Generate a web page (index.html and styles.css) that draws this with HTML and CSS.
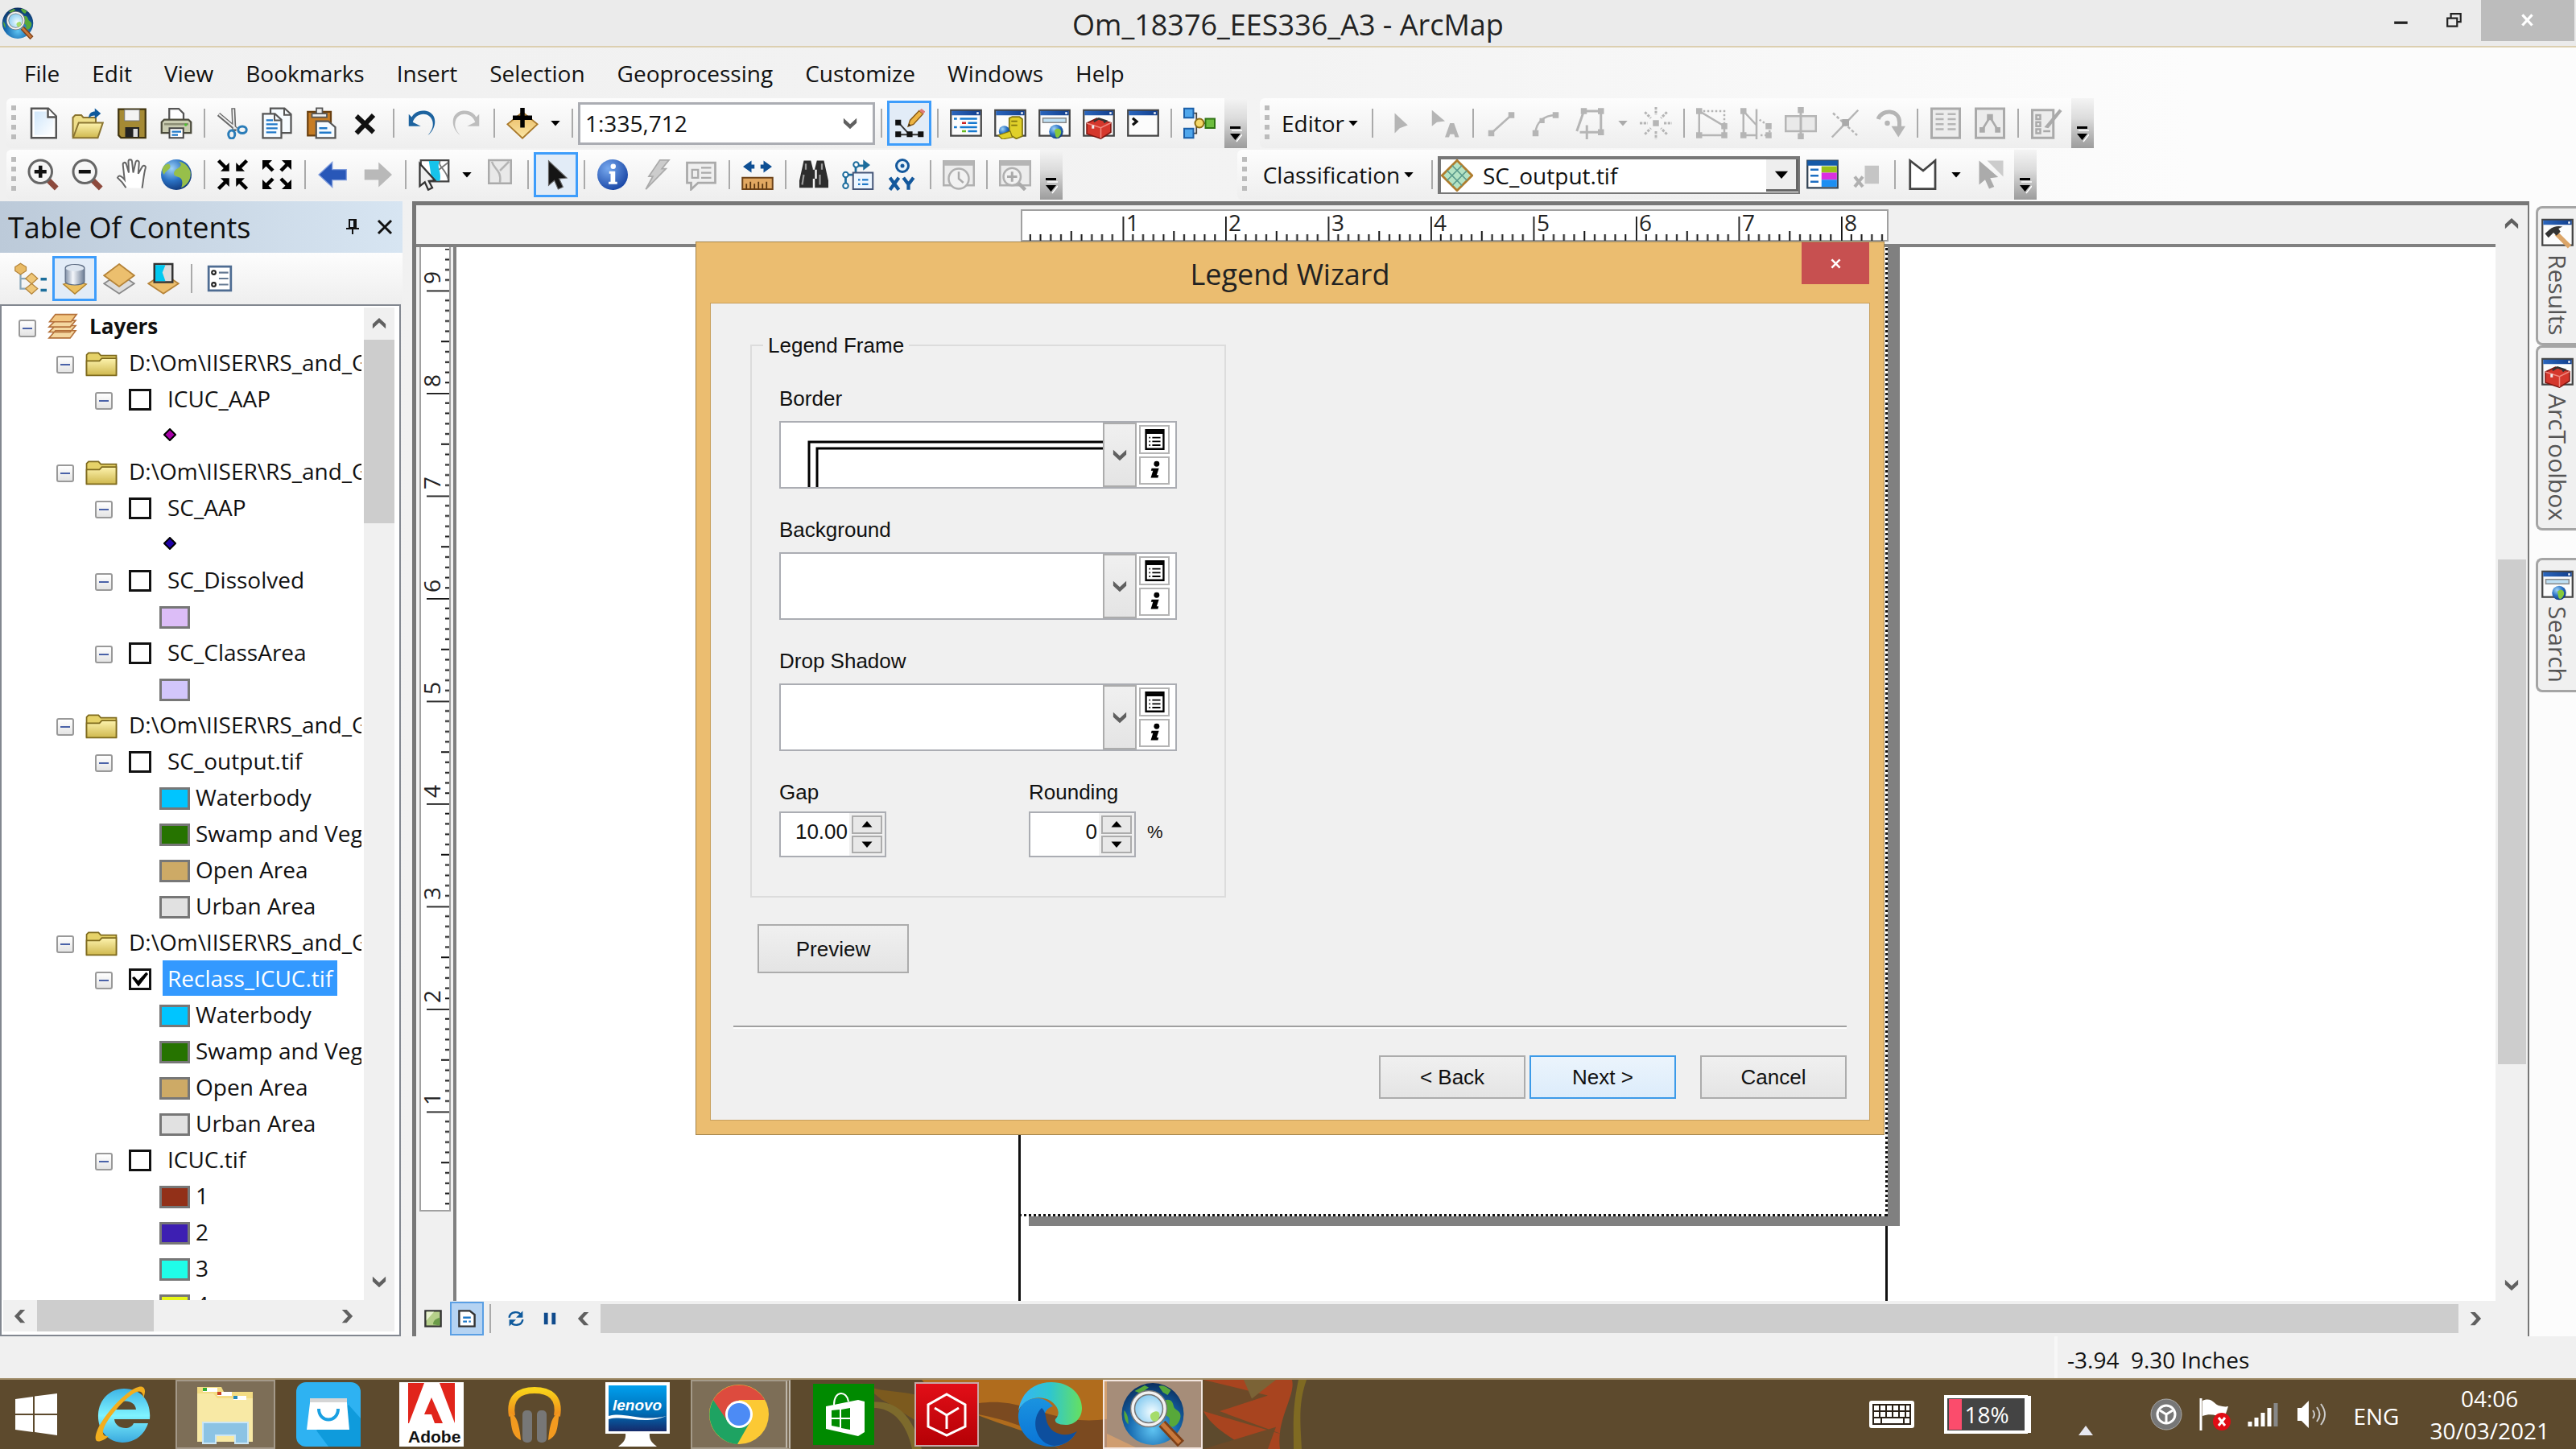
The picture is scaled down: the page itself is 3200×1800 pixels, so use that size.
FILE: index.html
```html
<!DOCTYPE html>
<html lang="en">
<head>
<meta charset="utf-8">
<title>Om_18376_EES336_A3 - ArcMap</title>
<link rel="stylesheet" href="styles.css">
</head>
<body>
<svg class="defs" aria-hidden="true">
  <defs>
    <linearGradient id="gPaper" x2="1" y2="1"><stop offset="0" stop-color="#cfe6fa"/><stop offset="1" stop-color="#fff"/></linearGradient>
    <linearGradient id="gGold" x2="0" y2="1"><stop offset="0" stop-color="#fdf3ae"/><stop offset="1" stop-color="#cfb84e"/></linearGradient>
    <linearGradient id="gOrange" x2="0" y2="1"><stop offset="0" stop-color="#e9b860"/><stop offset="1" stop-color="#fbe7a6"/></linearGradient>
    <linearGradient id="gTitle" x2="1"><stop offset="0" stop-color="#2b66bd"/><stop offset="1" stop-color="#123f8d"/></linearGradient>
    <linearGradient id="gCyl" x2="1"><stop offset="0" stop-color="#7f8fa6"/><stop offset=".4" stop-color="#f4f7fb"/><stop offset="1" stop-color="#6c7d95"/></linearGradient>
    <radialGradient id="gGlobe" cx=".35" cy=".3" r=".8"><stop offset="0" stop-color="#9fd3f7"/><stop offset=".5" stop-color="#2b72c4"/><stop offset="1" stop-color="#0c2f6e"/></radialGradient>
    <radialGradient id="gEarth" cx=".5" cy=".75" r=".8"><stop offset="0" stop-color="#5fc4f2"/><stop offset=".5" stop-color="#1467ad"/><stop offset="1" stop-color="#0a2552"/></radialGradient>
    <radialGradient id="gLens" cx=".6" cy=".6" r=".7"><stop offset="0" stop-color="#f2fcff"/><stop offset="1" stop-color="#6fc0ee"/></radialGradient>
    <radialGradient id="gInfo" cx=".35" cy=".3" r=".8"><stop offset="0" stop-color="#77a9ef"/><stop offset="1" stop-color="#123fa0"/></radialGradient>
    <linearGradient id="gIe" x2="0" y2="1"><stop offset="0" stop-color="#3db4e6"/><stop offset=".5" stop-color="#7ff3ff"/><stop offset="1" stop-color="#3aa9de"/></linearGradient>
    <linearGradient id="gLenovo" x2="0" y2="1"><stop offset="0" stop-color="#00a0ee"/><stop offset=".6" stop-color="#006db5"/><stop offset="1" stop-color="#152a6b"/></linearGradient>
    <linearGradient id="gHead" x2="0" y2="1"><stop offset="0" stop-color="#f9d21a"/><stop offset="1" stop-color="#f08a1c"/></linearGradient>
    <linearGradient id="gRed" x2="0" y2="1"><stop offset="0" stop-color="#e30f18"/><stop offset="1" stop-color="#b40005"/></linearGradient>
    <linearGradient id="gEdge1" x2="1"><stop offset="0" stop-color="#36b4f5"/><stop offset=".5" stop-color="#2fc6cf"/><stop offset="1" stop-color="#66e060"/></linearGradient>
    <linearGradient id="gEdge2" x2="0" y2="1"><stop offset="0" stop-color="#1a93e0"/><stop offset="1" stop-color="#0a74d6"/></linearGradient>
  </defs>
  <symbol id="new" viewBox="0 0 16 16"><path d="M2 .7h8.4L14.3 4.6v10.7H2z" fill="#fff" stroke="#555" stroke-width="1"/><path d="M3.5 2.2h6v3.500h3.500v8.200H3.500z" fill="url(#gPaper)"/><path d="M10.200.8V5h4" fill="#fff" stroke="#555"/></symbol>
  <symbol id="open" viewBox="0 0 16 16"><path d="M.6 15V5.200l1.200-1.200h3l1 1.200H12V8" fill="#efdf8b" stroke="#8a7430" stroke-width=".8"/><path d="M.7 15.300 3.500 7.800h12L13 15.300z" fill="url(#gGold)" stroke="#8a7430" stroke-width=".8"/><path d="M8.500 5.500c0-2.500 1.500-3.300 3-3.300V.6l3 2.600-3 2.600V4.200c-1.500 0-2.200.3-3 1.300z" fill="#0f5a9c"/></symbol>
  <symbol id="save" viewBox="0 0 16 16"><path d="M1.300 1h13.400v14.200H2.500L1.300 14z" fill="#a58a34" stroke="#40340f" stroke-width=".9"/><path d="M4.300 1.300h7.400v5.500H4.300z" fill="#f3f3f3" stroke="#777" stroke-width=".4"/><path d="M4.600 10h7v5h-7z" fill="#222"/><path d="M8.600 10.800h2.200v4H8.600z" fill="#ddd"/></symbol>
  <symbol id="print" viewBox="0 0 16 16"><path d="M4.500 7V.8h4.700l2.400 2.400V7z" fill="#fff" stroke="#555" stroke-width=".9"/><path d="M.7 7.500 2 6.200h12l1.300 1.300v5.300H.7z" fill="#c9cbb0" stroke="#4b4b3c" stroke-width=".9"/><path d="M2 8.500h12" stroke="#8b8d74"/><path d="M4.600 10.500h6.900V15.300H4.600z" fill="#fff" stroke="#444" stroke-width=".8"/><path d="M5.800 12.200h4.600M5.800 13.800h3" stroke="#1f78c8" stroke-width=".9"/><circle cx="12.700" cy="8.800" r=".7" fill="#4bc12f"/></symbol>
  <symbol id="cut" viewBox="0 0 16 16"><path d="M1 3.600 9.800 11M8.300.5 8.800 12" stroke="#666" stroke-width="2"/><path d="M1.200 3.600 9.800 10.800M8.300 1 8.700 11" stroke="#eee" stroke-width=".8"/><ellipse cx="7.500" cy="13.600" rx="1.600" ry="2" fill="none" stroke="#2a7cb8" stroke-width="1.200"/><ellipse cx="12.800" cy="11.300" rx="2.100" ry="1.700" fill="none" stroke="#2a7cb8" stroke-width="1.200"/></symbol>
  <symbol id="copy" viewBox="0 0 16 16"><path d="M4.800.6h7L15 3.600v9.200H4.800z" fill="#f6fbff" stroke="#555" stroke-width=".9"/><path d="M11.600.7v3.200H15" fill="none" stroke="#555" stroke-width=".8"/><path d="M1 3.300h6l3.200 3v9H1z" fill="#f6fbff" stroke="#555" stroke-width=".9"/><path d="M6.800 3.400v3.200H10" fill="none" stroke="#555" stroke-width=".8"/><path d="M2.700 6.500H6M2.700 8.500h5.600M2.700 10.500h5.600M2.700 12.500h5" stroke="#1f78c8" stroke-width=".9"/></symbol>
  <symbol id="paste" viewBox="0 0 16 16"><path d="M1.300 2.300h11.500v11.800H1.300z" fill="#c67c24" stroke="#6a4010" stroke-width=".9"/><path d="M3.400 3.200h7.400V5H3.400zM5.600.5h3v2.700h-3z" fill="#eee" stroke="#555" stroke-width=".7"/><path d="M5.500 7h6l3.500 3v5.300H5.500z" fill="#f6fbff" stroke="#555" stroke-width=".9"/><path d="M7 10.500h4M7 12.700h6" stroke="#1f78c8" stroke-width="1"/></symbol>
  <symbol id="del" viewBox="0 0 16 16"><path d="M3.500 4.500 12 12.500M12 4 3.500 13" stroke="#111" stroke-width="2.400"/></symbol>
  <symbol id="undo" viewBox="0 0 16 16"><path d="M3.500 7.500C5 2.500 12 2 13.300 7c.7 3-.6 5-2.300 7 4.500-3.500 5-10.500-.5-12C6.500 1.200 4 3 3 5L1.500 3.500v6h6z" fill="#1d639f"/></symbol>
  <symbol id="redo" viewBox="0 0 16 16"><path d="M12.500 7.500C11 2.500 4 2 2.700 7c-.7 3 .6 5 2.300 7C.5 10.500 0 3.500 5.500 2 9.500 1.200 12 3 13 5l1.500-1.500v6h-6z" fill="#bdbdbd"/></symbol>
  <symbol id="add" viewBox="0 0 16 16"><path d="M8 2.500 15.500 8.500 8 15.500.5 8.500z" fill="url(#gOrange)" stroke="#a8782a" stroke-width=".7"/><path d="M8 .4v9.800M3.200 5.300h9.600" stroke="#000" stroke-width="2.200"/></symbol>
  <symbol id="sketch" viewBox="0 0 16 16"><path d="M2 7.500 8 14H2.500M8 14h5.500" stroke="#333" stroke-width=".8" fill="none"/><path d="M.5 6.200h3v3h-3zM.5 12.300h3v3h-3zM6.500 12.300h3v3h-3zM12.300 12.300h3v3h-3z" fill="#111"/><path d="M7.200 9.700 8.200 6.500 13 1.500l2 1.600-5 5.500z" fill="#edb544" stroke="#8a5a14" stroke-width=".6"/><path d="M13 1.500 14.200.4l2 1.600-1.200 1.200z" fill="#e07a75"/><path d="m7.200 9.700.4-1.500 1 .8z" fill="#222"/></symbol>
  <symbol id="win" viewBox="0 0 16 16"><path d="M.5 1.500h15v12.700H.5z" fill="#fcfcfc" stroke="#444" stroke-width=".9"/><path d="M.9 1.900h14.200v2.200H.9z" fill="url(#gTitle)"/><path d="M13.300 2.500h1v1h-1z" fill="#fff"/></symbol>
  <symbol id="toc" viewBox="0 0 16 16"><use href="#win"/><path d="M2 5.800h1.500M5 5.800h8.500M2 10h1.500M5 10h8.500" stroke="#1679cf" stroke-width="1"/><path d="M9 7.900h4.500M9 12h4.500" stroke="#1679cf"/><path d="M6 7.900h2" stroke="#c22"/><path d="M6 12h2" stroke="#6b2"/></symbol>
  <symbol id="catalog" viewBox="0 0 16 16"><use href="#win"/><path d="M7.500 5.500 9 4.800h3.500L14 6v8.500l-3 1.200-3.500-2z" fill="#e0d02a" stroke="#82760e" stroke-width=".7"/><path d="M8.500 7h3M8.500 9h3" stroke="#82760e" stroke-width=".7"/><circle cx="5" cy="12" r="2.700" fill="url(#gGlobe)"/><path d="m2 14 6-2 1 3-5 1z" fill="#e0d02a" stroke="#82760e" stroke-width=".5"/></symbol>
  <symbol id="search" viewBox="0 0 16 16"><use href="#win"/><path d="M2.200 5.500h11.500v2.200H2.200z" fill="#bfe0f4" stroke="#888" stroke-width=".6"/><circle cx="8.800" cy="12.200" r="3.500" fill="url(#gGlobe)"/><path d="M8 11.500c2-2 4 0 3 2s-2 2-2.500 1z" fill="#86c93b"/></symbol>
  <symbol id="toolbox" viewBox="0 0 16 16"><use href="#win"/><path d="M2 8 7 5.600l7 2.200v4.700l-5 3.200-7-2.400z" fill="#d5372c" stroke="#7c150f" stroke-width=".6"/><path d="M2 8l7 2.300 5-2.500M9 10.300v5.200" stroke="#f08a80" stroke-width=".6" fill="none"/><path d="M5.500 7.200 8 5.700l3.500 1.200-1 .8" fill="none" stroke="#333" stroke-width="1"/><path d="M4.500 9h1.200v1.700H4.500z" fill="#eee"/></symbol>
  <symbol id="python" viewBox="0 0 16 16"><use href="#win"/><path d="m2.800 5.500 2 1.700-2 1.700" fill="none" stroke="#111" stroke-width="1.300"/></symbol>
  <symbol id="model" viewBox="0 0 16 16"><path d="M5 3h1.500v10H5M6.500 8h5" stroke="#444" fill="none" stroke-width=".7"/><path d="M.4.700h4.600v4.600H.4zM.4 10.700h4.600v4.600H.4z" fill="#50a7ec" stroke="#1b5fa8" stroke-width=".8"/><circle cx="8" cy="8" r="2.200" fill="#f5d867" stroke="#8b6c12" stroke-width=".8"/><path d="M11 5.800h4.600v4.600H11z" fill="#6dbd3e" stroke="#2e7412" stroke-width=".8"/></symbol>
  <symbol id="zin" viewBox="0 0 16 16"><path d="m10 10.300 4.500 4.500" stroke="#8d4a3d" stroke-width="2.700"/><circle cx="6.500" cy="6.500" r="5.700" fill="#f6f6f6" stroke="#666" stroke-width="1.200"/><path d="M6.500 3.500v6M3.500 6.500h6" stroke="#111" stroke-width="1.800"/></symbol>
  <symbol id="zout" viewBox="0 0 16 16"><path d="m10 10.300 4.500 4.500" stroke="#8d4a3d" stroke-width="2.700"/><circle cx="6.500" cy="6.500" r="5.700" fill="#f6f6f6" stroke="#666" stroke-width="1.200"/><path d="M3.500 6.500h6" stroke="#111" stroke-width="1.800"/></symbol>
  <symbol id="pan" viewBox="0 0 16 16"><path d="M5 14.500C3.500 12 2 10.500.8 9.500c.6-1.500 2-1 3.500 1L3.500 3.200c-.2-1.500 1.300-1.700 1.700-.3L6.400 7 6.200 1.500C6.200.2 7.900.2 8 1.500L8.600 7 9.800 1.800c.3-1.200 1.800-.9 1.700.4L11.100 7.500l2-3.500c.6-1 1.900-.4 1.600.7-.9 3-1 6-1.700 10" fill="#fff" stroke="#666" stroke-width=".8"/></symbol>
  <symbol id="globe" viewBox="0 0 16 16"><circle cx="8" cy="8" r="7.600" fill="url(#gGlobe)"/><path d="M9 1.500c2 1 1.500 2.500-.5 3.500S6 8.500 8.500 9s3 2.500 2 5.500c3.500-1.500 5-5 4.500-8C14 3.500 11.500 1.500 9 1.500zM2 3.500C4 2 5 2.500 5 4S2.500 6 2 8C.500 6.500 1 4.500 2 3.500z" fill="#97bf4a"/></symbol>
  <symbol id="fixin" viewBox="0 0 16 16"><path d="M1 1l3.500 3.500M15 1l-3.500 3.500M1 15l3.500-3.500M15 15l-3.500-3.500" stroke="#000" stroke-width="1.800"/><path d="M6.300 2v4.300H2zM9.700 2v4.300H14zM6.300 14V9.700H2zM9.700 14V9.700H14z"/></symbol>
  <symbol id="fixout" viewBox="0 0 16 16"><path d="M2 2l4 4M14 2l-4 4M2 14l4-4M14 14l-4-4" stroke="#000" stroke-width="1.800"/><path d="M.8.800v4.800L5.600.8zM15.200.8v4.800L10.400.8zM.8 15.200v-4.800l4.800 4.800zM15.200 15.200v-4.800l-4.800 4.800z"/></symbol>
  <symbol id="back" viewBox="0 0 16 16"><path d="M.8 8 7.500 1.800v3.600h7v5.200h-7v3.600z" fill="#2857b8" stroke="#7e9bdc" stroke-width=".5"/></symbol>
  <symbol id="fwd" viewBox="0 0 16 16"><path d="M15.200 8 8.500 1.800v3.600h-7v5.200h7v3.600z" fill="#b9b9b9"/></symbol>
  <symbol id="selfeat" viewBox="0 0 16 16"><path d="M1.500.8h13.800v10.500H1.500z" fill="#fff" stroke="#444" stroke-width=".9"/><path d="M5.500 1.200h5.500c-2 3 1 5 0 9.800H7z" fill="#17c3ea"/><path d="M11 1.200c-1 3 3 4 4 9M10.500 5.500 15 2" stroke="#777" fill="none" stroke-width=".7"/><path d="M1 2.500v11.200l2.500-2L5.200 15.500l2-1-1.700-3.300 3-.4z" fill="#eee" stroke="#333" stroke-width=".9"/></symbol>
  <symbol id="clear" viewBox="0 0 16 16"><path d="M2.500.8h11v11.500h-11z" fill="#e9e9e9" stroke="#aaa"/><path d="M4 1.500c1 4 5 4 4 10.500M8 6l4.500-4.500" stroke="#b5b5b5" fill="none"/></symbol>
  <symbol id="cursor" viewBox="0 0 16 16"><path d="M4 .8v12.800l3-2.600 2 4.600 2.500-1.200-2-4.300 4-.4z" fill="#151515" stroke="#666" stroke-width=".5"/></symbol>
  <symbol id="info" viewBox="0 0 16 16"><circle cx="8" cy="8" r="7.600" fill="url(#gInfo)"/><circle cx="8.300" cy="3.900" r="1.300" fill="#fff"/><path d="M6.300 6.300h3v5.200h1v1.200H6v-1.200h1V7.500h-.7z" fill="#fff"/></symbol>
  <symbol id="bolt" viewBox="0 0 16 16"><path d="M9.500.7H14L10.500 5h2L2.500 15.300 6 8.800H4z" fill="#ccc" stroke="#aaa" stroke-width=".7"/></symbol>
  <symbol id="popup" viewBox="0 0 16 16"><path d="M1 2h14v10H6.500L3 15.300V12H1z" fill="#efefef" stroke="#aaa" stroke-width="1.100"/><path d="M3.500 5.500h3v4h-3zM8 4.500h5M8 7h5M8 9.500h5" fill="none" stroke="#aaa" stroke-width=".9"/></symbol>
  <symbol id="measure" viewBox="0 0 16 16"><path d="M.8 4 5 1v2h1.500v2H5v2zM15.200 4 11 1v2H9.500v2H11v2z" fill="#0e4f94"/><path d="M.5 9.500h15v5.700H.5z" fill="#e2a862" stroke="#6e4318" stroke-width=".8"/><path d="M2.500 15v-2.500M4.500 15v-3.500M6.500 15v-2.500M8.500 15v-3.500M10.500 15v-2.500M12.500 15v-3.500" stroke="#5a3510" stroke-width=".7"/></symbol>
  <symbol id="find" viewBox="0 0 16 16"><path d="M3 1h3.500l1 4v9.500H.8V11zM13 1H9.500l-1 4v9.500h6.700V11zM6.500 5.500h3V10h-3z" fill="#2d2d2d"/><path d="M4 2.500v3M12 2.500v3M3 8l-.8 5M11 8v5" stroke="#9a9a9a" stroke-width=".9"/></symbol>
  <symbol id="route" viewBox="0 0 16 16"><path d="M1.800 13V8h5V3.500h5" fill="none" stroke="#1c6c9c" stroke-width="1.100"/><path d="M10.500.5 14 3.200l-3.500 2.700z" fill="#1c6c9c"/><path d="M5.500 7h9.800v8.200H5.500z" fill="#edf6ff" stroke="#457" stroke-width=".8"/><path d="M8 10.500h1M10 10.500h3M8 12.700h1M10 12.700h3" stroke="#1f78c8" stroke-width=".9"/><circle cx="1.800" cy="13.500" r="1.300" fill="#fff" stroke="#1c6c9c" stroke-width=".8"/><circle cx="1.800" cy="8" r="1.300" fill="#fff" stroke="#1c6c9c" stroke-width=".8"/><circle cx="7" cy="3" r="1.300" fill="#fff" stroke="#1c6c9c" stroke-width=".8"/></symbol>
  <symbol id="xy" viewBox="0 0 16 16"><circle cx="8" cy="3.600" r="3" fill="#e8f3fb" stroke="#14589c" stroke-width="1.200"/><circle cx="8" cy="3.600" r="1" fill="#14589c"/><path d="m1.800 9.500 4.400 6M6.200 9.500l-4.400 6M8.500 9.500l2.500 3.300 2.500-3.300M11 12.500v3" stroke="#14589c" stroke-width="1.700" fill="none"/></symbol>
  <symbol id="gwin" viewBox="0 0 16 16"><path d="M.5 1.300h15v12H.5z" fill="#ececec" stroke="#b0b0b0"/><path d="M.5 1h15v2.500H.5z" fill="#b5b5b5"/></symbol>
  <symbol id="time" viewBox="0 0 16 16"><use href="#gwin"/><circle cx="8" cy="10" r="5" fill="#f2f2f2" stroke="#b0b0b0"/><path d="M8 6.500V10l2.300 2" fill="none" stroke="#aaa"/></symbol>
  <symbol id="viewer" viewBox="0 0 16 16"><use href="#gwin"/><path d="m9 11.500 4 4" stroke="#aaa" stroke-width="1.800"/><circle cx="6.500" cy="9" r="4.300" fill="#f2f2f2" stroke="#b0b0b0"/><path d="M6.500 6.500v5M4 9h5" stroke="#aaa" stroke-width="1.200"/></symbol>
  <symbol id="g-arrow" viewBox="0 0 16 16"><path d="M5 3v10l2.500-2.500L11.500 9z" fill="#b5b5b5"/></symbol>
  <symbol id="g-arrowa" viewBox="0 0 16 16"><path d="M1.500 1.500v8L4 7.500 8 7zM8 15l2.500-7h2L15 15h-2l-.5-1.500h-2L10 15z" fill="#b5b5b5"/></symbol>
  <symbol id="g-line" viewBox="0 0 16 16"><path d="M3 13 13 4" stroke="#b5b5b5"/><path d="M1.500 11.500h3v3h-3zM11.500 2.500h3v3h-3z" fill="#b5b5b5"/></symbol>
  <symbol id="g-arc" viewBox="0 0 16 16"><path d="M3 13c0-5 4-9 10-9" stroke="#b5b5b5" fill="none"/><path d="M1.500 11.500h3v3h-3zM11.500 2.500h3v3h-3zM5 5.500h2.500V8H5z" fill="#b5b5b5"/></symbol>
  <symbol id="g-trace" viewBox="0 0 16 16"><path d="M1.500 12 5 2h8.500v10.500H10M6.500 9v7M3 12.500h7" stroke="#b5b5b5" fill="none" stroke-width="1.200"/><path d="M3.500.5h3v3h-3zM12 .500h3v3h-3zM12 11h3v3h-3z" fill="#b5b5b5"/></symbol>
  <symbol id="g-point" viewBox="0 0 16 16"><path d="M6.500 6.500h3v3h-3z" fill="#b5b5b5"/><path d="M8 0v4M8 12v4M0 8h4M12 8h4M2.500 2.500l3 3M13.500 2.500l-3 3M2.500 13.500l3-3M13.500 13.500l-3-3" stroke="#b5b5b5" stroke-width="1.200" stroke-dasharray="1.300 .6"/></symbol>
  <symbol id="g-edit" viewBox="0 0 16 16"><path d="M1.500 2v12H14V9.500zL14 9.500" fill="none" stroke="#b5b5b5"/><path d="M3.500 2H14v7" fill="none" stroke="#b5b5b5" stroke-dasharray="1 1"/><path d="M0 .500h3v3H0zM0 12.500h3v3H0zM12.500 12.500h3v3h-3zM12.500 8h3v3h-3z" fill="#b5b5b5"/></symbol>
  <symbol id="g-reshape" viewBox="0 0 16 16"><path d="M1.500 2v12h6M1.500 2 8 9M8 1v15" fill="none" stroke="#b5b5b5"/><path d="M10 14h4.500V9.500L9 6" fill="none" stroke="#b5b5b5" stroke-dasharray="1 1"/><path d="M0 .500h3v3H0zM0 12.500h3v3H0zM12.500 12.500h3v3h-3zM12.500 8h3v3h-3z" fill="#b5b5b5"/></symbol>
  <symbol id="g-cut" viewBox="0 0 16 16"><path d="M.5 4.500h15v7.500H.5z" fill="#e9e9e9" stroke="#b5b5b5"/><path d="M8 0v16" stroke="#b5b5b5" stroke-width="1.200"/><path d="M6.500 0h3v3h-3zM6.500 13h3v3h-3z" fill="#b5b5b5"/></symbol>
  <symbol id="g-split" viewBox="0 0 16 16"><path d="M1.500 15 14.500 1.500" stroke="#b5b5b5"/><path d="M2 3l12 11" stroke="#b5b5b5" stroke-dasharray="1.500 1"/><path d="M6.500 6h3.500v3.500H6.500z" fill="#aaa"/></symbol>
  <symbol id="g-rotate" viewBox="0 0 16 16"><path d="M2.500 6C4 1 13 1 13 7.500V11" fill="none" stroke="#b5b5b5" stroke-width="2"/><path d="M9 9.500h7L12.500 15z" fill="#b5b5b5"/><circle cx="7" cy="8" r="1.300" fill="#b5b5b5"/></symbol>
  <symbol id="g-table" viewBox="0 0 16 16"><path d="M1 .800h14v14.500H1z" fill="#ececec" stroke="#aaa" stroke-width="1.200"/><path d="M3 3.500h4M9 3.500h4M3 6h4M9 6h4M3 8.500h4M9 8.500h4M3 11h4M9 11h4" stroke="#b5b5b5"/></symbol>
  <symbol id="g-verts" viewBox="0 0 16 16"><path d="M1 .800h14v14.500H1z" fill="#ececec" stroke="#aaa" stroke-width="1.200"/><path d="M4 11.500 8 5l4 6.500" fill="none" stroke="#aaa"/><path d="M6.500 3.500h3v3h-3zM2.800 10h2.700v2.700H2.800zM10.500 10h2.700v2.700h-2.700z" fill="#aaa"/></symbol>
  <symbol id="g-create" viewBox="0 0 16 16"><path d="M1 1.500h10.500v13.800H1z" fill="#ececec" stroke="#aaa" stroke-width="1.200"/><path d="M3 4h2v2H3zM3 7.500h2v2H3zM3 11h2v2H3zM6.500 12H10" fill="none" stroke="#aaa"/><path d="M7 10 14.500 1l1.300 1L9 10.500z" fill="#aaa"/></symbol>
  <symbol id="raster" viewBox="0 0 16 16"><path d="M8 .500 15.500 8 8 15.500.5 8z" fill="#b4e3c4" stroke="#b07d2e" stroke-width="1.100"/><path d="m5.500 3 7.500 7.500M3 5.500 10.500 13M10.500 3 3 10.500M13 5.500 5.500 13" stroke="#5a9a8c" stroke-width=".7"/></symbol>
  <symbol id="traing" viewBox="0 0 16 16"><path d="M.5 1h15v13.500H.5z" fill="#fff" stroke="#345" stroke-width=".9"/><path d="M.5 1h15v2.500H.5z" fill="#145aa8"/><path d="M7.500 3.800h7.600V7H7.500z" fill="#97c11b"/><path d="M7.500 7h7.600v3.500H7.500z" fill="#db2fe0"/><path d="M7.500 10.500h7.600v3.500H7.500z" fill="#1d8ff2"/><path d="M2 5.500h4M2 8.500h4M2 11.500h4" stroke="#1d6fc2"/></symbol>
  <symbol id="g-clear2" viewBox="0 0 16 16"><path d="M7 3.500h7v9H7z" fill="#c5c5c5"/><path d="m2 9 4 5M6 9l-4 5" stroke="#b0b0b0" stroke-width="1.600"/></symbol>
  <symbol id="poly" viewBox="0 0 16 16"><path d="M1.500 1 8 6l6-5v14H1.500z" fill="#fff" stroke="#444" stroke-width="1.100"/></symbol>
  <symbol id="g-sel" viewBox="0 0 16 16"><path d="M7 1h8v8z" fill="#ccc"/><path d="M3 1v12l3-2.500 2 4.500 2.500-1-2-4.300 4-.5z" fill="#ababab"/></symbol>
  <symbol id="t-order" viewBox="0 0 16 16"><path d="M3 5v8h5M3 8h4" stroke="#8aa6b8" fill="none" stroke-width=".9"/><path d="m3 .5 2.800 1.700v2L3 6 .3 4.200v-2z" fill="#e9bb66" stroke="#b4843a" stroke-width=".5"/><path d="M8.500 5.300 11.500 8l-3 2.700L5.500 8zM8.500 10.500l3 2.500-3 2.700-3-2.700z" fill="#efc778" stroke="#b4843a" stroke-width=".5"/><path d="M13 8.300h3M13 13.800h3" stroke="#1d6f9c" stroke-width="1.400"/></symbol>
  <symbol id="t-source" viewBox="0 0 16 16"><path d="m2 11 6-2 6 2-6 5z" fill="#ecc05f" stroke="#b0812d" stroke-width=".6"/><path d="M3 2.500c0-2.500 10-2.500 10 0v7c0 2.500-10 2.500-10 0z" fill="url(#gCyl)" stroke="#5a6a80" stroke-width=".5"/><ellipse cx="8" cy="2.600" rx="4.700" ry="1.600" fill="#dde6f0"/></symbol>
  <symbol id="t-vis" viewBox="0 0 16 16"><path d="M8 5.500 15.500 10.500 8 15.500.5 10.500z" fill="#ddd" stroke="#888" stroke-width=".7"/><path d="M8 .800 15.500 6.500 8 12 .5 6.500z" fill="#ecbf6e" stroke="#b58338" stroke-width=".7"/></symbol>
  <symbol id="t-sel" viewBox="0 0 16 16"><path d="M8 5.500 15.500 10.500 8 15.500.5 10.500z" fill="#ecbf6e" stroke="#b58338" stroke-width=".7"/><path d="M3.500.800h9v9h-9z" fill="#ddd" stroke="#333" stroke-width="1"/><path d="M4 1.300h5L7.500 5 9 9.300H4z" fill="#00c8f0"/></symbol>
  <symbol id="t-opt" viewBox="0 0 16 16"><path d="M1.500 1h13v14h-13z" fill="#fff" stroke="#4e6c92" stroke-width="1.300"/><circle cx="4.500" cy="4.500" r="1.100" fill="none" stroke="#222"/><circle cx="4.500" cy="11.500" r="1.100" fill="none" stroke="#222"/><path d="M7.500 4.500h5.500M7.500 8h5.500M7.500 11.500h5.500" stroke="#667a94"/></symbol>
  <symbol id="layers" viewBox="0 0 16 14"><path d="M4 9.500h11l-3 4H.5zM4 6.800h11l-3 3.500H.5z" fill="#f4d7a0" stroke="#b4713a" stroke-width=".7"/><path d="M4 4h11l-3 3.500H.5z" fill="#f4d7a0" stroke="#b4713a" stroke-width=".7"/><path d="M4 .700h11.500l-3 4H.8z" fill="#f2c681" stroke="#b4713a" stroke-width=".7"/></symbol>
  <symbol id="folder" viewBox="0 0 16 13"><path d="M.5 12V2l1-1h5l1.200 1.300H15.500V12z" fill="#e6d268" stroke="#7e6a1d" stroke-width=".7"/><path d="M.5 5h6.500l1.200-1.300h7.300V12.300H.5z" fill="url(#gGold)" stroke="#7e6a1d" stroke-width=".7"/></symbol>
  <symbol id="hammer" viewBox="0 0 16 16"><use href="#win"/><path d="m7.500 8.500 6.500 6.500" stroke="#dba568" stroke-width="2.400"/><path d="M1.800 8.500 4 6.500c2-1.800 4.500-2 6.500-1.500L8.500 6l1 1.500-2 2L6 8 3.500 10.500z" fill="#333"/></symbol>
  <symbol id="arcmap" viewBox="0 0 16 16"><circle cx="8" cy="7.900" r="7.700" fill="url(#gEarth)"/><path d="M11 4.500c1.500-.5 2 .5 2.200 1.500s1.800 1 1.700 2.500-1.500 3-2.400 2.500.3-2-.8-2.500-1.700-1-1-2 .8-1.200.3-2zM9.500 1c1-.5 2 .2 3 1l-.8 1.200-1.200-.7zM3.500 2.200 6 .8l1 .5-2 1.500zM.9 7c.7.8 1.200 2 1 3.500C1 9.500.8 8.500.9 7z" fill="#57a83a"/><path d="m10.300 10.300 4.700 5" stroke="#7e3f16" stroke-width="2.200"/><path d="m10.300 10.300 4.400 4.700" stroke="#c8783c" stroke-width="1.100"/><circle cx="7" cy="6.600" r="4" fill="url(#gLens)" stroke="#777" stroke-width="1.300"/><circle cx="7" cy="6.600" r="4" fill="none" stroke="#f2f2f2" stroke-width=".7"/><path d="M8 7.500c1.500-.8 2 .3 1.500 1.500S7.800 9.800 7.500 9s0-1.200.5-1.500z" fill="#a5dc6a"/></symbol>
  <symbol id="chev" viewBox="0 0 16 16"><path d="M1.500 3 8 9l6.500-6v4.700L8 13.700 1.500 7.700z" fill="#606060"/></symbol>
  <symbol id="tri" viewBox="0 0 16 16"><path d="M1.500 4.500h13L8 12z"/></symbol>
  <symbol id="list" viewBox="0 0 16 16"><path d="M1 .500h14v15H1z" fill="#fff" stroke="#000" stroke-width="1.500"/><path d="M1 1h14v2.500H1z"/><path d="M3.500 6.500h1M6 6.500h6.500M3.500 9.500h1M6 9.500h6.500M3.500 12.500h1M6 12.500h6.500" stroke="#000" stroke-width="1.200"/></symbol>
  <symbol id="ii" viewBox="0 0 16 16"><circle cx="9.500" cy="3" r="2.200"/><path d="M5.500 6.500h5.800L9.500 12h1.500l-.5 2H4.800l1.800-5.500H5z"/></symbol>
  <symbol id="more" viewBox="0 0 16 22"><path d="M1 2.500h13" stroke="#000" stroke-width="3"/><path d="M1 10h13l-6.500 8z"/><path d="M3 6h13M9 20l7-9" stroke="#fff" stroke-width="1.500"/></symbol>
  <symbol id="keyb" viewBox="0 0 58 36"><rect x="1" y="1" width="56" height="34" rx="3" fill="#fff"/><path d="M5 5h48v26H5z" fill="#2a2118"/><path d="M7 10h44M7 18h44" stroke="#fff" stroke-width="6" stroke-dasharray="6 2"/><path d="M7 26h8M17 26h26M45 26h6" stroke="#fff" stroke-width="6"/></symbol>
</svg>

<header class="titlebar">
  <svg class="appicon"><use href="#arcmap"/></svg>
  <h1>Om_18376_EES336_A3 - ArcMap</h1>
  <div class="winbtns">
    <button aria-label="Minimise"><svg viewBox="0 0 20 20"><path d="M2 12h15" stroke="#222" stroke-width="3"/></svg></button>
    <button aria-label="Restore"><svg viewBox="0 0 20 20"><path d="M2 7h11v9H2zM6 6V2h11v9h-3" fill="none" stroke="#222" stroke-width="2"/></svg></button>
    <button class="x" aria-label="Close"><svg viewBox="0 0 20 20"><path d="m4 3 11 12M15 3 4 15" stroke="#fff" stroke-width="3"/></svg></button>
  </div>
</header>

<nav class="menubar">
  <button>File</button><button>Edit</button><button>View</button><button>Bookmarks</button><button>Insert</button><button>Selection</button><button>Geoprocessing</button><button>Customize</button><button>Windows</button><button>Help</button>
</nav>

<div class="toolrow">
  <div class="toolbar">
    <i class="grip"></i>
    <button class="tb" aria-label="New"><svg><use href="#new"/></svg></button>
    <button class="tb" aria-label="Open"><svg><use href="#open"/></svg></button>
    <button class="tb" aria-label="Save"><svg><use href="#save"/></svg></button>
    <button class="tb" aria-label="Print"><svg><use href="#print"/></svg></button>
    <i class="sep"></i>
    <button class="tb" aria-label="Cut"><svg><use href="#cut"/></svg></button>
    <button class="tb" aria-label="Copy"><svg><use href="#copy"/></svg></button>
    <button class="tb" aria-label="Paste"><svg><use href="#paste"/></svg></button>
    <button class="tb" aria-label="Delete"><svg><use href="#del"/></svg></button>
    <i class="sep"></i>
    <button class="tb" aria-label="Undo"><svg><use href="#undo"/></svg></button>
    <button class="tb" aria-label="Redo"><svg><use href="#redo"/></svg></button>
    <i class="sep"></i>
    <button class="tb" aria-label="Add data"><svg><use href="#add"/></svg></button>
    <button class="caret" aria-label="Add data options"><svg><use href="#tri"/></svg></button>
    <i class="sep"></i>
    <div class="scale"><select aria-label="Map scale"><option>1:335,712</option></select><svg><use href="#chev"/></svg></div>
    <i class="sep"></i>
    <button class="tb on" aria-label="Editor toolbar"><svg><use href="#sketch"/></svg></button>
    <i class="sep"></i>
    <button class="tb" aria-label="Table of contents"><svg><use href="#toc"/></svg></button>
    <button class="tb" aria-label="Catalog"><svg><use href="#catalog"/></svg></button>
    <button class="tb" aria-label="Search"><svg><use href="#search"/></svg></button>
    <button class="tb" aria-label="ArcToolbox"><svg><use href="#toolbox"/></svg></button>
    <button class="tb" aria-label="Python"><svg><use href="#python"/></svg></button>
    <i class="sep"></i>
    <button class="tb" aria-label="ModelBuilder"><svg><use href="#model"/></svg></button>
    <button class="overflow" aria-label="Toolbar options"><svg><use href="#more"/></svg></button>
  </div>
  <div class="toolbar">
    <i class="grip"></i>
    <button class="tmenu editor">Editor<svg><use href="#tri"/></svg></button>
    <i class="sep"></i>
    <button class="tb" aria-label="Edit tool"><svg><use href="#g-arrow"/></svg></button>
    <button class="tb" aria-label="Edit annotation"><svg><use href="#g-arrowa"/></svg></button>
    <i class="sep"></i>
    <button class="tb" aria-label="Straight segment"><svg><use href="#g-line"/></svg></button>
    <button class="tb" aria-label="Arc segment"><svg><use href="#g-arc"/></svg></button>
    <button class="tb" aria-label="Trace"><svg><use href="#g-trace"/></svg></button>
    <button class="caret dim" aria-label="Trace options"><svg><use href="#tri"/></svg></button>
    <button class="tb" aria-label="Point"><svg><use href="#g-point"/></svg></button>
    <i class="sep"></i>
    <button class="tb" aria-label="Edit vertices"><svg><use href="#g-edit"/></svg></button>
    <button class="tb" aria-label="Reshape"><svg><use href="#g-reshape"/></svg></button>
    <button class="tb" aria-label="Cut polygons"><svg><use href="#g-cut"/></svg></button>
    <button class="tb" aria-label="Split"><svg><use href="#g-split"/></svg></button>
    <button class="tb" aria-label="Rotate"><svg><use href="#g-rotate"/></svg></button>
    <i class="sep"></i>
    <button class="tb" aria-label="Attributes"><svg><use href="#g-table"/></svg></button>
    <button class="tb" aria-label="Sketch properties"><svg><use href="#g-verts"/></svg></button>
    <i class="sep"></i>
    <button class="tb" aria-label="Create features"><svg><use href="#g-create"/></svg></button>
    <button class="overflow" aria-label="Toolbar options"><svg><use href="#more"/></svg></button>
  </div>
</div>

<div class="toolrow">
  <div class="toolbar">
    <i class="grip"></i>
    <button class="tb" aria-label="Zoom in"><svg><use href="#zin"/></svg></button>
    <button class="tb" aria-label="Zoom out"><svg><use href="#zout"/></svg></button>
    <button class="tb" aria-label="Pan"><svg><use href="#pan"/></svg></button>
    <button class="tb" aria-label="Full extent"><svg><use href="#globe"/></svg></button>
    <i class="sep"></i>
    <button class="tb" aria-label="Fixed zoom in"><svg><use href="#fixin"/></svg></button>
    <button class="tb" aria-label="Fixed zoom out"><svg><use href="#fixout"/></svg></button>
    <i class="sep"></i>
    <button class="tb" aria-label="Previous extent"><svg><use href="#back"/></svg></button>
    <button class="tb" aria-label="Next extent"><svg><use href="#fwd"/></svg></button>
    <i class="sep"></i>
    <button class="tb" aria-label="Select features"><svg><use href="#selfeat"/></svg></button>
    <button class="caret" aria-label="Selection options"><svg><use href="#tri"/></svg></button>
    <button class="tb" aria-label="Clear selection"><svg><use href="#clear"/></svg></button>
    <i class="sep"></i>
    <button class="tb on" aria-label="Select elements"><svg><use href="#cursor"/></svg></button>
    <i class="sep"></i>
    <button class="tb" aria-label="Identify"><svg><use href="#info"/></svg></button>
    <button class="tb" aria-label="Hyperlink"><svg><use href="#bolt"/></svg></button>
    <button class="tb" aria-label="HTML popup"><svg><use href="#popup"/></svg></button>
    <i class="sep"></i>
    <button class="tb" aria-label="Measure"><svg><use href="#measure"/></svg></button>
    <i class="sep"></i>
    <button class="tb" aria-label="Find"><svg><use href="#find"/></svg></button>
    <button class="tb" aria-label="Find route"><svg><use href="#route"/></svg></button>
    <button class="tb" aria-label="Go to XY"><svg><use href="#xy"/></svg></button>
    <i class="sep"></i>
    <button class="tb" aria-label="Time slider"><svg><use href="#time"/></svg></button>
    <i class="sep"></i>
    <button class="tb" aria-label="Viewer window"><svg><use href="#viewer"/></svg></button>
    <button class="overflow" aria-label="Toolbar options"><svg><use href="#more"/></svg></button>
  </div>
  <div class="toolbar classif">
    <i class="grip"></i>
    <button class="tmenu classes">Classification<svg><use href="#tri"/></svg></button>
    <i class="sep"></i>
    <div class="rastersel"><svg class="ric"><use href="#raster"/></svg><select aria-label="Classification layer"><option>SC_output.tif</option></select><span class="drop"><svg><use href="#tri"/></svg></span></div>
    <button class="tb" aria-label="Training sample manager"><svg><use href="#traing"/></svg></button>
    <button class="tb" aria-label="Clear samples"><svg><use href="#g-clear2"/></svg></button>
    <i class="sep"></i>
    <button class="tb" aria-label="Draw polygon"><svg><use href="#poly"/></svg></button>
    <button class="caret" aria-label="Draw options"><svg><use href="#tri"/></svg></button>
    <button class="tb" aria-label="Select samples"><svg><use href="#g-sel"/></svg></button>
    <button class="overflow" aria-label="Toolbar options"><svg><use href="#more"/></svg></button>
  </div>
</div>

<main class="work">
  <aside class="toc">
    <div class="tochead"><h2>Table Of Contents</h2>
      <button aria-label="Auto hide"><svg viewBox="0 0 20 20"><path d="M6 1v10h8V1H5M2 12h16M10 12v7M12 1v10" fill="none" stroke="#111" stroke-width="2"/></svg></button>
      <button aria-label="Close"><svg viewBox="0 0 20 20"><path d="m2 2 16 16M18 2 2 18" stroke="#111" stroke-width="3"/></svg></button></div>
    <div class="toctools">
      <button class="tb" aria-label="List by drawing order"><svg><use href="#t-order"/></svg></button>
      <button class="tb on" aria-label="List by source"><svg><use href="#t-source"/></svg></button>
      <button class="tb" aria-label="List by visibility"><svg><use href="#t-vis"/></svg></button>
      <button class="tb" aria-label="List by selection"><svg><use href="#t-sel"/></svg></button>
      <i class="sep"></i>
      <button class="tb" aria-label="Options"><svg class="small"><use href="#t-opt"/></svg></button>
    </div>
    <div class="treebox">
      <div class="treeview">
        <div class="row l0"><button class="exp" aria-label="Collapse"></button><svg class="lay"><use href="#layers"/></svg><b>Layers</b></div>
        <div class="row l1"><button class="exp" aria-label="Collapse"></button><svg class="fol"><use href="#folder"/></svg><span>D:\Om\IISER\RS_and_G</span></div>
        <div class="row l2"><button class="exp" aria-label="Collapse"></button><label><input type="checkbox"><span>ICUC_AAP</span></label></div>
        <div class="row pt"><svg viewBox="0 0 16 16"><path d="M8 1l7 7-7 7-7-7z" fill="#a800a8" stroke="#000" stroke-width="2"/></svg></div>
        <div class="row l1"><button class="exp" aria-label="Collapse"></button><svg class="fol"><use href="#folder"/></svg><span>D:\Om\IISER\RS_and_G</span></div>
        <div class="row l2"><button class="exp" aria-label="Collapse"></button><label><input type="checkbox"><span>SC_AAP</span></label></div>
        <div class="row pt"><svg viewBox="0 0 16 16"><path d="M8 1l7 7-7 7-7-7z" fill="#1f00a8" stroke="#000" stroke-width="2"/></svg></div>
        <div class="row l2"><button class="exp" aria-label="Collapse"></button><label><input type="checkbox"><span>SC_Dissolved</span></label></div>
        <div class="row sw"><i class="lilac"></i></div>
        <div class="row l2"><button class="exp" aria-label="Collapse"></button><label><input type="checkbox"><span>SC_ClassArea</span></label></div>
        <div class="row sw"><i class="mauve"></i></div>
        <div class="row l1"><button class="exp" aria-label="Collapse"></button><svg class="fol"><use href="#folder"/></svg><span>D:\Om\IISER\RS_and_G</span></div>
        <div class="row l2"><button class="exp" aria-label="Collapse"></button><label><input type="checkbox"><span>SC_output.tif</span></label></div>
        <div class="row sw"><i class="water"></i><span>Waterbody</span></div>
        <div class="row sw"><i class="swamp"></i><span>Swamp and Veg</span></div>
        <div class="row sw"><i class="openar"></i><span>Open Area</span></div>
        <div class="row sw"><i class="urban"></i><span>Urban Area</span></div>
        <div class="row l1"><button class="exp" aria-label="Collapse"></button><svg class="fol"><use href="#folder"/></svg><span>D:\Om\IISER\RS_and_G</span></div>
        <div class="row l2 sel"><button class="exp" aria-label="Collapse"></button><label><input type="checkbox" checked><span>Reclass_ICUC.tif</span></label></div>
        <div class="row sw"><i class="water"></i><span>Waterbody</span></div>
        <div class="row sw"><i class="swamp"></i><span>Swamp and Veg</span></div>
        <div class="row sw"><i class="openar"></i><span>Open Area</span></div>
        <div class="row sw"><i class="urban"></i><span>Urban Area</span></div>
        <div class="row l2"><button class="exp" aria-label="Collapse"></button><label><input type="checkbox"><span>ICUC.tif</span></label></div>
        <div class="row sw"><i class="c1"></i><span>1</span></div>
        <div class="row sw"><i class="c2"></i><span>2</span></div>
        <div class="row sw"><i class="c3"></i><span>3</span></div>
        <div class="row sw"><i class="c4"></i><span>4</span></div>
      </div>
      <div class="vbar"><button class="up" aria-label="Scroll up"><svg><use href="#chev"/></svg></button><i class="thumb"></i><button class="down" aria-label="Scroll down"><svg><use href="#chev"/></svg></button></div>
      <div class="hbar"><button class="left" aria-label="Scroll left"><svg><use href="#chev"/></svg></button><i class="thumb"></i><button class="right" aria-label="Scroll right"><svg><use href="#chev"/></svg></button></div>
    </div>
  </aside>

  <section class="mapframe">
    <div class="hruler">
      <svg viewBox="0 0 1078 40">
        <defs>
          <pattern id="ticksH" x="-1" width="127.500" height="40" patternUnits="userSpaceOnUse"><path d="M.8 9v30M12.800 31v8M25.500 31v8M38.300 31v8M51 31v8M63.800 27v12M76.500 31v8M89.300 31v8M102 31v8M114.800 31v8" stroke="#111" stroke-width="2"/></pattern>
        </defs>
        <rect x="1" y="1" width="1076" height="38" fill="#fff" stroke="#a0a0a0" stroke-width="2"/>
        <rect x="4" y="2" width="1070" height="37" fill="url(#ticksH)"/>
        <g class="rnum"><text x="131" y="27">1</text><text x="258" y="27">2</text><text x="386" y="27">3</text><text x="513" y="27">4</text><text x="641" y="27">5</text><text x="768" y="27">6</text><text x="896" y="27">7</text><text x="1023" y="27">8</text></g>
      </svg>
    </div>
    <div class="vruler">
      <svg viewBox="0 0 39 1198">
        <defs>
          <pattern id="ticksV" y="53.500" width="39" height="127.500" patternUnits="userSpaceOnUse"><path d="M9 .8h28M32 12.800h5M32 25.500h5M32 38.300h5M32 51h5M27 63.800h10M32 76.500h5M32 89.300h5M32 102h5M32 114.800h5" stroke="#111" stroke-width="2"/></pattern>
        </defs>
        <path d="M1 0v1197h37V0" fill="#fff" stroke="#a0a0a0" stroke-width="2"/>
        <rect y="2" width="37" height="1190" fill="url(#ticksV)"/>
        <g class="rnum"><text transform="translate(26 46) rotate(-90)">9</text><text transform="translate(26 174) rotate(-90)">8</text><text transform="translate(26 301) rotate(-90)">7</text><text transform="translate(26 429) rotate(-90)">6</text><text transform="translate(26 556) rotate(-90)">5</text><text transform="translate(26 684) rotate(-90)">4</text><text transform="translate(26 811) rotate(-90)">3</text><text transform="translate(26 939) rotate(-90)">2</text><text transform="translate(26 1066) rotate(-90)">1</text></g>
      </svg>
    </div>
    <div class="canvas"><i class="guide g1"></i><i class="guide g2"></i><i class="shadow"></i><i class="paper"></i></div>
    <div class="vbar"><button class="up" aria-label="Scroll up"><svg><use href="#chev"/></svg></button><i class="thumb"></i><button class="down" aria-label="Scroll down"><svg><use href="#chev"/></svg></button></div>
    <div class="viewbar">
      <button class="vb" aria-label="Data view"><svg viewBox="0 0 20 20"><path d="M2 2h16v16H2z" fill="#b6d08a" stroke="#333" stroke-width="2"/><path d="M3 3h8L3 12z" fill="#e8f1cf"/><path d="M10 16c0-4 3-6 7-7v8z" fill="#6b9b48"/></svg></button>
      <button class="vb on" aria-label="Layout view"><svg viewBox="0 0 20 20"><path d="M2 2h11l5 4v12H2z" fill="#fff" stroke="#333" stroke-width="2"/><path d="M6 9h8M6 13h4M12 13h2" stroke="#1f78c8" stroke-width="2"/></svg></button>
      <i class="sep"></i>
      <button class="vb" aria-label="Refresh"><svg viewBox="0 0 20 20"><path d="M3 9c1-7 10-7 13-2M17 11c-1 7-10 7-13 2" fill="none" stroke="#0f5a9c" stroke-width="2"/><path d="M17 2v7h-7zM3 18v-7h7z" fill="#0f5a9c"/></svg></button>
      <button class="vb" aria-label="Pause drawing"><svg viewBox="0 0 20 20"><path d="M6 4v12M14 4v12" stroke="#0f4a8c" stroke-width="4"/></svg></button>
      <div class="hbar"><button class="left" aria-label="Scroll left"><svg><use href="#chev"/></svg></button><i class="thumb"></i><button class="right" aria-label="Scroll right"><svg><use href="#chev"/></svg></button></div>
    </div>
  </section>

  <nav class="sidetabs">
    <button><svg><use href="#hammer"/></svg>Results</button>
    <button><svg><use href="#toolbox"/></svg>ArcToolbox</button>
    <button class="apart"><svg><use href="#search"/></svg>Search</button>
  </nav>
</main>

<footer class="status"><span></span><output>-3.94&nbsp; 9.30 Inches</output></footer>

<footer class="taskbar">
  <svg class="wall" viewBox="0 0 680 88" preserveAspectRatio="none" aria-hidden="true">
    <path d="M70 0h120l60 20 100 68h80L250 0z" fill="#a8661c"/><path d="M80 0c20 20 60 10 90 25s30 30 20 40-60-30-80-40z" fill="#7c5a1e"/><path d="M90 30c40-10 60 20 70 58h-12C140 50 120 34 96 36z" fill="#7d6a2c"/><path d="M160 0h230v88h-60C300 60 200 50 160 0z" fill="#b06c1d"/><path d="M230 30c60-10 90 30 160 20v38H330C300 60 260 50 230 44z" fill="#7b4a20"/><path d="M510 0h110c5 20-20 50-15 88h-40C540 70 520 60 510 40z" fill="#a8441f"/><path d="M510 0l80 20-60 20 80 30-100-30zM510 88l90-28-10 28z" fill="#6d4a28"/><path d="M560 0h40l-30 24z" fill="#7b6336"/><path d="M628 0h10c-10 30-8 50-6 88h-10c0-30-2-50 6-88z" fill="#7f6a22"/>
  </svg>
  <button class="start" aria-label="Start"><svg viewBox="0 0 52 52"><path d="M0 7 22 4v21H0zM24 3.500 52 0v25H24zM0 27h22v21L0 45zM24 27h28v25l-28-4z" fill="#fff"/></svg></button>
  <button class="task" aria-label="Internet Explorer"><svg viewBox="0 0 80 80"><path fill-rule="evenodd" d="M42 8c22 0 34 16 32 38H30c1 12 20 15 24 5h18c-6 18-20 24-32 24C20 74 9 58 10 40S24 8 42 8zM30 34h27C56 20 32 20 30 34z" fill="url(#gIe)"/><path d="M66 20c4-10 2-16-6-14C44 10 14 44 8 62c-3 9-1 13 5 11 4-1 7-3 10-6-6 1-9-2-6-10C22 44 44 18 58 12c6-2 8 2 8 8z" fill="#f2ae1e"/></svg></button>
  <button class="task open" aria-label="File Explorer"><svg viewBox="0 0 80 80"><path d="M5 6h30l3 6h36v62H5z" fill="#f3dc83"/><path d="M5 14h20l5 6h44v54H5z" fill="#f8e9a5"/><path d="M12 7h18v5H12zM30 12h18v5H30zM50 17h16v5H50z" fill="#fff"/><path d="M12 7h5v4h-5z" fill="#3a3"/><path d="M30 12h5v4h-5z" fill="#c42"/><path d="M50 17h5v4h-5z" fill="#28b"/><path d="M12 76V50h56v26H52V66H28v10z" fill="#8cc3e4" stroke="#cbe6f5" stroke-width="2"/></svg></button>
  <button class="task" aria-label="App shop"><svg viewBox="0 0 80 80"><rect width="80" height="80" rx="12" fill="#2eb2f2"/><path d="M65 28 80 45v35H40L25 60z" fill="#0f9bdc"/><path d="M17 20h46v6l3 33H13l4-33z" fill="#fff"/><path d="M17 20h46v5H17z" fill="#d5d5d5"/><path d="M28 33c0 18 24 18 24 0" fill="none" stroke="#1aa0e2" stroke-width="4"/></svg></button>
  <button class="task" aria-label="Adobe"><svg viewBox="0 0 80 80"><path d="M0 0h80v80H0z" fill="#fff"/><path d="M11 1h20L12 51H11zM69 1H50l19 50zM40 19l14 32H44l-4-11h-9z" fill="#e1251b"/><text x="11" y="75" class="adobe">Adobe</text></svg></button>
  <button class="task" aria-label="Music"><svg viewBox="0 0 80 80"><path d="M12 42C8 18 22 10 40 10s32 8 28 32" fill="none" stroke="url(#gHead)" stroke-width="8"/><path d="M9 38c8 2 12 12 14 34C10 66 12 54 9 38zM71 38c-8 2-12 12-14 34 13-6 11-18 14-34z" fill="#f39a1f"/><rect x="25" y="35" width="12" height="40" rx="5" fill="#777"/><rect x="43" y="35" width="12" height="40" rx="5" fill="#777"/></svg></button>
  <button class="task" aria-label="Lenovo"><svg viewBox="0 0 80 80"><path d="M0 0h80v64H55c-1 8 4 12 9 16H16c5-4 10-8 9-16H0z" fill="#fff"/><path d="M4 4h72v57H4z" fill="url(#gLenovo)"/><text x="9" y="35" class="lenovo">lenovo</text><path d="M4 42c20-6 40 8 72 0-30 12-50-2-72 4z" fill="#fff"/></svg></button>
  <button class="task open multi" aria-label="Chrome"><svg viewBox="0 0 80 80"><circle cx="40" cy="40" r="37" fill="#fcc934"/><path d="M8 22A37 37 0 0 1 72 22H40L24 50z" fill="#dd4b3e"/><path d="M8 22a37 37 0 0 0 30 55l16-28H26z" fill="#1ea362"/><circle cx="40" cy="40" r="17" fill="#fff"/><circle cx="40" cy="40" r="14" fill="#4c8bf5"/></svg></button>
  <button class="task" aria-label="Store"><svg viewBox="0 0 80 80"><path d="M2 2h76v76H2z" fill="#008a00"/><path d="M18 30 58 22l8 2v38l-8 5-40-9z" fill="#fff"/><path d="M28 28c0-18 16-18 18-4" fill="none" stroke="#fff" stroke-width="2"/><path d="M25 35l10-1v10H25zM37 34l11-2v12H37zM25 46h10v10l-10-2zM37 46h11v13l-11-2z" fill="#008a00"/></svg></button>
  <button class="task" aria-label="Cube"><svg viewBox="0 0 80 80"><path d="M1 1h78v78H1z" fill="url(#gRed)" stroke="#c8a8a8" stroke-width="2"/><path d="M40 15 63 28v27L40 66 17 55V28zM25 32l15 9 15-9M40 41v17" fill="none" stroke="#fff" stroke-width="3"/></svg></button>
  <button class="task" aria-label="Edge"><svg viewBox="0 0 80 80"><path d="M1 36C4 12 22 0 42 0c24 0 38 16 38 32 0 14-10 21-20 21-12 0-14-4-13-7 8-8 2-18-8-24C22 14 6 24 1 36z" fill="url(#gEdge1)"/><path d="M1 44C0 24 20 16 34 22c6 3 10 8 10 8-10 2-14 14-10 26 6 16 24 18 38 8-6 10-18 16-30 16C18 80 2 64 1 44z" fill="url(#gEdge2)"/><path d="M30 32c-16 16-6 46 16 47 14-1 22-8 28-18-14 8-30 4-36-8-4-8-2-16-8-21z" fill="#0d4f9e"/></svg></button>
  <button class="task active" aria-label="ArcMap"><svg><use href="#arcmap"/></svg></button>
  <span class="grow"></span>
  <div class="tray">
    <button class="kb" aria-label="Touch keyboard"><svg><use href="#keyb"/></svg></button>
    <span class="battery"><i></i><span>18%</span></span>
    <button class="hid" aria-label="Show hidden icons"><svg viewBox="0 0 20 12"><path d="M10 0 19 12H1z" fill="#e8e8f0"/></svg></button>
    <svg viewBox="0 0 40 40"><circle cx="20" cy="20" r="19" fill="#777" stroke="#aaa"/><circle cx="20" cy="20" r="11" fill="none" stroke="#fff" stroke-width="3"/><path d="M20 20v10M20 20l-8-5M20 20l8-5" stroke="#fff" stroke-width="3"/></svg>
    <svg viewBox="0 0 40 40"><path d="M3 0v40" stroke="#fff" stroke-width="3"/><path d="M5 3c12-5 15 5 20 6s8 2 12 1l-4 12c-8 3-14-5-28 0z" fill="#fff"/><circle cx="29" cy="29" r="11" fill="#e00c14"/><path d="m25 24 8 10M33 24l-8 10" stroke="#fff" stroke-width="3"/></svg>
    <svg viewBox="0 0 40 40"><path d="M4 29v6M12 24v11M20 18v17M28 12v23" stroke="#fff" stroke-width="5"/><path d="M36 6v29" stroke="#888" stroke-width="5"/></svg>
    <svg viewBox="0 0 40 40"><path d="M3 12h5l9-9v34l-9-9H3z" fill="#fff"/><path d="M22 15q4 5 0 10M27 11q7 9 0 18M32 7q10 13 0 26" fill="none" stroke="#ccc" stroke-width="2"/></svg>
    <span class="lang">ENG</span>
    <time><span>04:06</span><span>30/03/2021</span></time>
  </div>
</footer>

<section class="dialog" role="dialog" aria-labelledby="dlgtitle">
  <header><h2 id="dlgtitle">Legend Wizard</h2><button aria-label="Close"><svg viewBox="0 0 20 20"><path d="m4 4 12 12M16 4 4 16" stroke="#fff" stroke-width="3"/></svg></button></header>
  <form class="dbody">
    <fieldset>
      <legend>Legend Frame</legend>
      <label for="border">Border</label>
      <div class="symrow"><div class="symsel"><svg class="prev" viewBox="0 0 401 80" preserveAspectRatio="xMinYMin slice"><path d="M35 80V24h366M45 80V32h356" fill="none" stroke="#000" stroke-width="3"/></svg><select id="border"><option></option></select><span class="drop"><svg><use href="#chev"/></svg></span></div><div class="mini"><button type="button" aria-label="Border style"><svg><use href="#list"/></svg></button><button type="button" aria-label="Border properties"><svg><use href="#ii"/></svg></button></div></div>
      <label for="bg">Background</label>
      <div class="symrow"><div class="symsel"><select id="bg"><option></option></select><span class="drop"><svg><use href="#chev"/></svg></span></div><div class="mini"><button type="button" aria-label="Background style"><svg><use href="#list"/></svg></button><button type="button" aria-label="Background properties"><svg><use href="#ii"/></svg></button></div></div>
      <label for="shadow">Drop Shadow</label>
      <div class="symrow"><div class="symsel"><select id="shadow"><option></option></select><span class="drop"><svg><use href="#chev"/></svg></span></div><div class="mini"><button type="button" aria-label="Shadow style"><svg><use href="#list"/></svg></button><button type="button" aria-label="Shadow properties"><svg><use href="#ii"/></svg></button></div></div>
      <div class="nums">
        <div class="num"><label for="gap">Gap</label><div class="spin"><input id="gap" value="10.00"><span><button type="button" aria-label="More gap"><svg class="flip"><use href="#tri"/></svg></button><button type="button" aria-label="Less gap"><svg><use href="#tri"/></svg></button></span></div></div>
        <div class="num"><label for="round">Rounding</label><div class="spin"><input id="round" value="0"><span><button type="button" aria-label="More rounding"><svg class="flip"><use href="#tri"/></svg></button><button type="button" aria-label="Less rounding"><svg><use href="#tri"/></svg></button></span></div></div>
        <span class="pct">%</span>
      </div>
    </fieldset>
    <button type="button" class="btn preview">Preview</button>
    <hr>
    <div class="actions"><button type="button" class="btn">&lt; Back</button><button type="button" class="btn next">Next &gt;</button><button type="button" class="btn cancel">Cancel</button></div>
  </form>
</section>
</body>
</html>
```
FILE: styles.css
```css
* { box-sizing: border-box; }
body {
  margin: 0;
  height: 100vh;
  display: flex;
  flex-direction: column;
  position: relative;
  overflow: hidden;
  background: linear-gradient(90deg, #f0f0f0, #f3f3f3 50%, #fcfcfc 85%);
  color: #111;
  font: 28px/36px "Open Sans", "Noto Sans", sans-serif;
}
button, input, select { font: inherit; color: inherit; margin: 0; }
button { border: 0; padding: 0; background: none; display: flex; align-items: center; justify-content: center; }
h1, h2 { margin: 0; font-weight: 400; }
svg { display: block; }
.defs { position: absolute; width: 0; height: 0; }

/* title bar and menu */
.titlebar { height: 59px; flex: none; display: grid; grid-template-columns: 1fr auto 1fr; align-items: center; background: #ebebeb; border-bottom: 2px solid #dccfb0; }
.appicon { width: 40px; height: 40px; margin-left: 2px; }
.titlebar h1 { font-size: 36px; line-height: 48px; padding-top: 4px; color: #222; }
.winbtns { justify-self: end; align-self: start; display: flex; }
.winbtns button { width: 66px; height: 51px; }
.winbtns svg { width: 22px; height: 22px; }
.winbtns .x { width: 116px; background: #bcbcbc; margin-right: 2px; }
.menubar { height: 63px; flex: none; display: flex; align-items: center; gap: 40px; padding-left: 30px; }

/* toolbars */
.toolrow { display: flex; flex: none; height: 64px; padding-left: 8px; gap: 16px; }
.toolbar { display: flex; align-items: center; height: 62px; background: linear-gradient(#fdfdfd, #eeeeee); border-radius: 6px 0 0 6px; }
.classif { margin-left: 201px; }
.grip { width: 18px; height: 44px; background: repeating-linear-gradient(#bbb 0 6px, transparent 6px 12px) 6px 0 / 6px 100% no-repeat; }
.tb { width: 55px; height: 56px; flex: none; }
.tb svg { width: 40px; height: 40px; }
.tb svg.small { width: 34px; height: 36px; }
.tb.on { border: 3px solid #3e9dfb; background: #e2ecf7; }
.tb.on svg { width: 38px; height: 40px; }
.sep { width: 15px; height: 36px; flex: none; background: linear-gradient(#aaa, #aaa) 7px 0 / 2px 100% no-repeat; }
.caret { width: 27px; height: 56px; flex: none; }
.caret svg, .tmenu svg { width: 14px; height: 16px; flex: none; }
.caret.dim { fill: #aaa; }
.tmenu { height: 56px; gap: 4px; }
.editor { width: 114px; }
.classes { width: 216px; }
.scale { width: 369px; height: 53px; display: grid; grid-template-columns: 1fr 38px; align-items: center; border: 3px solid #abadb3; background: #fff; }
.scale select { grid-area: 1 / 1 / 2 / 3; }
.scale svg { grid-area: 1 / 2; width: 20px; height: 22px; pointer-events: none; }
select { appearance: none; border: 0; border-radius: 0; background: transparent; padding: 0 6px; width: 100%; height: 100%; }
.overflow { width: 28px; height: 62px; margin-left: 4px; align-items: flex-end; padding-bottom: 6px; background: linear-gradient(#f4f4f4, #dcdcdc 40%, #9c9c9c); }
.overflow svg { width: 16px; height: 22px; }
.rastersel { width: 450px; height: 47px; display: flex; align-items: center; border: 4px solid #777; border-width: 4px 2px 2px 4px; background: #fff; }
.rastersel select { padding-left: 12px; }
.ric { width: 40px; height: 40px; flex: none; }
.drop { display: flex; align-items: center; justify-content: center; flex: none; pointer-events: none; }
.rastersel .drop { width: 40px; height: 40px; background: #eee; border: solid #666; border-width: 0 3px 3px 0; }
.rastersel .drop svg { width: 20px; height: 20px; }

/* work area */
.work { flex: 1; display: flex; min-height: 0; }
.toc { width: 512px; flex: none; display: flex; flex-direction: column; min-height: 0; }
.tochead { width: 500px; height: 64px; flex: none; display: flex; align-items: center; gap: 16px; padding: 0 10px; background: linear-gradient(90deg, #bccad9, #d7e5f2); }
.tochead h2 { flex: 1; font-size: 36px; line-height: 48px; padding-top: 2px; }
.tochead button { width: 24px; height: 24px; }
.tochead svg { width: 20px; height: 20px; }
.toctools { width: 500px; height: 64px; flex: none; display: flex; align-items: center; padding-left: 10px; background: linear-gradient(#fdfdfd, #eeeeee); }
.treebox {
  width: 498px; flex: 1; min-height: 0;
  display: grid; grid-template: minmax(0, 1fr) 39px / minmax(0, 1fr) 38px;
  padding: 2px 6px 4px 2px; border: 2px solid #828790; background: #fff;
}
.treeview { overflow: hidden; margin-right: 3px; }
.row { height: 45px; display: flex; align-items: center; white-space: nowrap; }
.exp { width: 22px; height: 22px; flex: none; margin-top: 6px; border: 2px solid #999; border-radius: 3px; background: linear-gradient(#4a62a8, #4a62a8) center / 12px 2px no-repeat, linear-gradient(#fff, #e4e4e4); }
.l0 { padding-left: 19px; gap: 13px; }
.l0 b { font-size: 26px; }
.l1 { padding-left: 66px; gap: 14px; }
.l2 { padding-left: 114px; gap: 20px; }
.lay { width: 40px; height: 32px; }
.fol { width: 40px; height: 32px; margin-top: 4px; flex: none; }
.l2 label { display: flex; align-items: center; gap: 14px; }
.l2 label span { padding: 4px 6px; }
.sel label span { background: #3399ff; color: #fff; }
input[type="checkbox"] { appearance: none; width: 28px; height: 27px; margin-top: 4px; border: 3px solid #111; background: #fff; display: grid; place-items: center; }
input[type="checkbox"]:checked::before { content: ""; width: 20px; height: 18px; background: #000; clip-path: polygon(0 40%, 14% 30%, 38% 60%, 88% 0, 100% 14%, 40% 100%); }
.pt { padding-left: 199px; }
.pt svg { width: 16px; height: 16px; }
.sw { padding-left: 194px; gap: 7px; }
.sw i { width: 38px; height: 28px; flex: none; margin-top: 4px; border: 3px solid #777; }
.lilac { background: #dcbdf7; } .mauve { background: #d2c6fb; }
.water { background: #00c5ff; } .swamp { background: #267300; } .openar { background: #cdaa66; } .urban { background: #e1e1e1; }
.c1 { background: #923018; } .c2 { background: #3d1fb2; } .c3 { background: #1ffde8; } .c4 { background: #e9f716; }

/* scroll bars */
.vbar { display: flex; flex-direction: column; background: #f0f0f0; }
.vbar .up, .vbar .down { width: 100%; height: 40px; flex: none; }
.hbar { display: flex; background: #f0f0f0; }
.hbar .left, .hbar .right { width: 42px; flex: none; }
.vbar svg, .hbar svg { width: 20px; height: 20px; }
.up svg { transform: rotate(180deg); } .left svg { transform: rotate(90deg); } .right svg { transform: rotate(-90deg); }
.thumb { background: #cdcdcd; }
.treebox .vbar { grid-row: 1 / 3; grid-column: 2; padding-bottom: 42px; }
.treebox .vbar .thumb { height: 228px; }
.vbar .down { margin-top: auto; }
.treebox .hbar { grid-row: 2; }
.treebox .hbar .thumb { width: 145px; }
.hbar .right { margin-left: auto; }

/* layout view */
.mapframe {
  flex: 1; min-width: 0; min-height: 0; display: grid;
  grid-template: 52px minmax(0, 1fr) 44px / 50px minmax(0, 1fr) 40px;
  border: solid #777; border-width: 5px 2px 0 5px; background: #f0f0f0;
}
.hruler { grid-area: 1 / 1 / 2 / 3; padding: 5px 0 0 751px; border-bottom: 4px solid #808080; }
.hruler svg { width: 1078px; height: 40px; }
.vruler { grid-area: 2 / 1; padding-left: 4px; border-right: 4px solid #808080; overflow: hidden; }
.vruler svg { width: 39px; height: 1198px; }
.rnum { font-size: 28px; fill: #222; }
.canvas { grid-area: 2 / 2; position: relative; overflow: hidden; background: #fff; }
.guide { position: absolute; top: 0; bottom: 0; width: 3px; background: #111; }
.g1 { left: 698px; } .g2 { left: 1775px; }
.shadow { position: absolute; left: 711px; top: 0; width: 1082px; height: 1216px; background: #808080; }
.paper { position: absolute; left: 698px; top: -4px; width: 1080px; height: 1208px; background: #fff; border: 3px dotted #111; border-left: 3px solid #111; }
.mapframe > .vbar { grid-area: 1 / 3 / 3 / 4; }
.mapframe > .vbar .up { height: 46px; }
.mapframe > .vbar .thumb { margin: 394px 2px 0 3px; height: 627px; }
.viewbar { grid-area: 3 / 1 / 4 / 4; display: flex; align-items: center; }
.vb { width: 42px; height: 42px; flex: none; }
.vb svg { width: 24px; height: 24px; }
.vb.on { background: #b5d3f2; border: 2px solid #5a9fe4; }
.viewbar .sep { margin-right: 4px; }
.viewbar .hbar { flex: 1; height: 40px; }
.viewbar .hbar .thumb { flex: 1; margin: 2px 0; }
.viewbar .hbar .right { margin-right: 44px; }
.sidetabs { width: 58px; flex: none; padding: 6px 0 0 8px; display: flex; flex-direction: column; font-size: 30px; }
.sidetabs button { width: 50px; padding: 10px 0 9px; writing-mode: vertical-rl; gap: 7px; justify-content: flex-start; border: 3px solid #a5a5a5; border-right: 0; border-radius: 8px 0 0 8px; background: #f0f0f0; color: #555; }
.sidetabs svg { width: 40px; height: 40px; flex: none; }
.sidetabs .apart { margin-top: 34px; }

.status { height: 52px; flex: none; display: grid; grid-template-columns: 2556px 1fr; background: #f0f0f0; line-height: 58px; }
.status span { border-right: 4px solid #f7f7f7; }
.status output { padding-left: 12px; }

/* task bar */
.taskbar { height: 88px; flex: none; display: flex; position: relative; background: #5d4a2d; border-top: 2px solid #a08c68; color: #fff; }
.wall { position: absolute; left: 985px; top: 0; width: 680px; height: 86px; }
.taskbar button, .tray { position: relative; }
.start { width: 90px; }
.start svg { width: 52px; height: 52px; }
.task { width: 124px; height: 86px; margin-right: 4px; }
.task svg { width: 80px; height: 80px; flex: none; }
.task.open, .task.active { background: rgba(255, 255, 255, .2); border: 2px solid rgba(255, 255, 255, .3); }
.task.multi { border-right: 6px double rgba(255, 255, 255, .5); }
.task.active { background: rgba(255, 225, 215, .45); border-color: #f3e6e0; }
.adobe { font: bold 21px "Liberation Sans", sans-serif; fill: #111; }
.lenovo { font: italic bold 19px "Liberation Sans", sans-serif; fill: #fff; }
.grow { flex: 1; }
.tray { display: flex; align-items: center; padding-right: 33px; gap: 20px; font-size: 28px; }
.tray > svg { width: 40px; height: 40px; }
.kb svg { width: 58px; height: 38px; }
.battery { width: 104px; height: 48px; display: flex; align-items: center; margin: 0 42px 0 16px; border: 4px solid #fff; background: #444; box-shadow: 5px 0 0 -1px #fff; }
.battery i { width: 16px; height: 38px; margin: 0 3px 0 2px; background: #fb4c6c; }
.hid { width: 20px; margin: 40px 50px 0 0; }
.hid svg { width: 20px; height: 12px; }
.lang { padding: 4px 18px 0 12px; }
.tray time { display: flex; flex-direction: column; align-items: center; line-height: 40px; }

/* dialog window */
.dialog { position: absolute; left: 864px; top: 300px; width: 1477px; padding: 0 18px 18px; background: #ebbd70; border: 1px solid #a4854d; font: 26px/32px "Liberation Sans", Arial, sans-serif; }
.dialog > header { display: grid; grid-template-columns: 1fr auto 1fr; height: 76px; }
.dialog h2 { grid-column: 2; font: 36px/80px "Open Sans", "Noto Sans", sans-serif; color: #222; }
.dialog > header button { width: 84px; height: 52px; justify-self: end; background: #c75050; }
.dialog > header svg { width: 17px; height: 17px; }
.dbody { background: #f0f0f0; padding: 36px 28px 26px; outline: 1px solid #c9a05c; }
fieldset { width: 591px; margin: 0 0 33px 21px; padding: 34px 34px 48px; border: 2px solid #dcdcdc; min-width: 0; }
legend { padding: 0 6px; margin-left: -20px; }
fieldset label { display: block; margin-bottom: 12px; }
.symrow { display: flex; width: 494px; height: 84px; margin-bottom: 35px; border: 2px solid #abadb3; background: #fff; }
.symsel { flex: 1; display: grid; grid-template-columns: 1fr 42px; }
.symsel select { grid-area: 1 / 1 / 2 / 3; }
.prev { grid-area: 1 / 1; width: 100%; height: 80px; }
.symsel .drop { grid-area: 1 / 2; background: linear-gradient(#f0f0f0, #e4e4e4); border: 2px solid #acacac; }
.symsel .drop svg { width: 20px; height: 22px; }
.mini { width: 48px; display: flex; flex-direction: column; gap: 3px; padding: 3px 7px 3px 3px; }
.mini button { flex: 1; border: 2px solid #b4b4b4; }
.mini svg { width: 25px; height: 26px; }
.nums { display: flex; align-items: flex-start; }
.num { width: 310px; }
.num + .num { width: 133px; }
.num label { margin-bottom: 8px; }
.spin { display: flex; width: 133px; height: 57px; border: 2px solid #abadb3; background: #fff; }
.spin input { flex: 1; min-width: 0; padding: 0 2px 8px 0; border: 0; background: transparent; text-align: right; }
.spin > span { width: 44px; padding: 3px; display: flex; flex-direction: column; gap: 2px; background: #f0f0f0; }
.spin button { flex: 1; border: 2px solid #acacac; background: #e8e8e8; }
.spin svg { width: 16px; height: 16px; }
.flip { transform: rotate(180deg); }
.pct { margin: 50px 0 0 14px; font-size: 22px; }
.btn { width: 182px; height: 54px; border: 2px solid #acacac; background: linear-gradient(#f0f0f0, #e4e4e4); }
.preview { width: 188px; height: 61px; margin-left: 30px; }
hr { margin: 65px 0 33px; border: solid; border-width: 2px 0; border-color: #a0a0a0 transparent #fff; }
.actions { display: flex; justify-content: flex-end; gap: 5px; }
.next { border-color: #3c9ae8; background: linear-gradient(#ebf4fc, #dcecfb); }
.cancel { margin-left: 25px; }
```
